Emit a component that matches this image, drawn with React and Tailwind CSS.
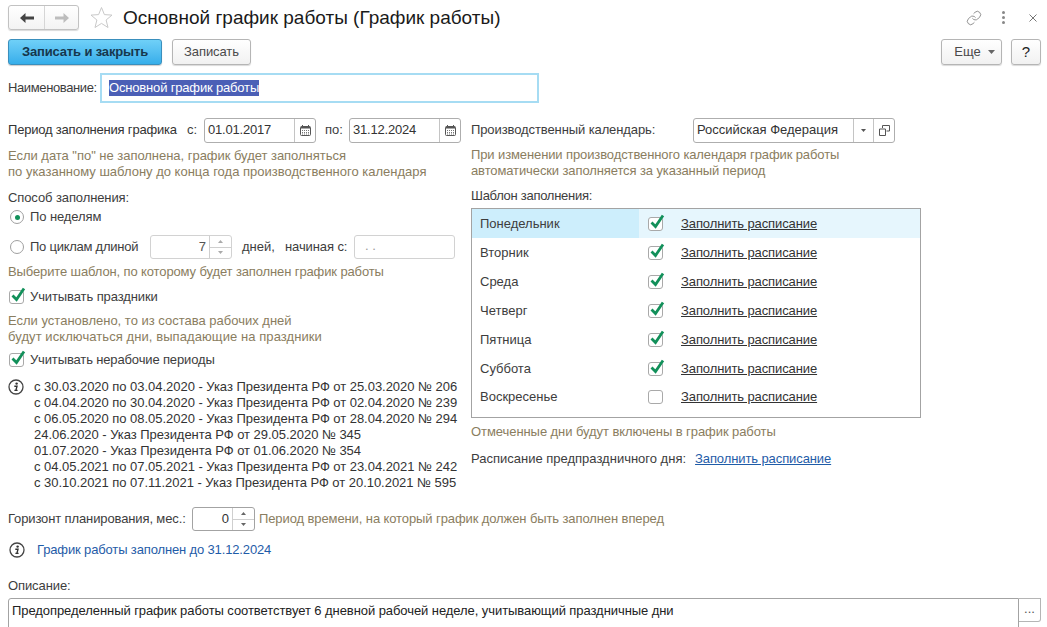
import React from 'react';
import { Link } from 'lucide-react';

const hint = 'text-[#8a7d60]';
const fieldBorder = 'border border-[#aeaeae] rounded-[3px] bg-white';

const days = [
  { name: 'Понедельник', on: true, active: true },
  { name: 'Вторник', on: true },
  { name: 'Среда', on: true },
  { name: 'Четверг', on: true },
  { name: 'Пятница', on: true },
  { name: 'Суббота', on: true },
  { name: 'Воскресенье', on: false }
];

const periods = [
  'с 30.03.2020 по 03.04.2020 - Указ Президента РФ от 25.03.2020 № 206',
  'с 04.04.2020 по 30.04.2020 - Указ Президента РФ от 02.04.2020 № 239',
  'с 06.05.2020 по 08.05.2020 - Указ Президента РФ от 28.04.2020 № 294',
  '24.06.2020 - Указ Президента РФ от 29.05.2020 № 345',
  '01.07.2020 - Указ Президента РФ от 01.06.2020 № 354',
  'с 04.05.2021 по 07.05.2021 - Указ Президента РФ от 23.04.2021 № 242',
  'с 30.10.2021 по 07.11.2021 - Указ Президента РФ от 20.10.2021 № 595'
];

function Check({ on }) {
  return (
    <span className="relative block w-[15px] h-[14px] shrink-0 border border-[#a9a9a9] rounded-[3px] bg-white">
      {on && (
        <svg className="absolute left-[1px] top-[-5px]" width="15" height="16" viewBox="0 0 15 16" fill="none">
          <path d="M1.5 9.5 L5.5 13.5 L13 2.5" stroke="#12905a" strokeWidth="2.8" />
        </svg>
      )}
    </span>
  );
}

function Radio({ on }) {
  return (
    <span className="flex items-center justify-center w-[14px] h-[14px] shrink-0 border border-[#a0a0a0] rounded-full bg-white">
      {on && <span className="block w-[5px] h-[5px] rounded-full bg-[#12905a]" />}
    </span>
  );
}

function InfoIcon() {
  return (
    <svg width="16" height="16" viewBox="0 0 16 16" fill="none" className="shrink-0">
      <circle cx="8" cy="8" r="7" stroke="#444" strokeWidth="1.3" />
      <circle cx="8.6" cy="4.6" r="1.2" fill="#333" />
      <path d="M6.3 7.2 H9 L7.9 11.4 H9.6 M6.4 11.4 H8" stroke="#333" strokeWidth="1.4" />
    </svg>
  );
}

function CalendarIcon() {
  return (
    <svg width="11" height="11" viewBox="0 0 11 11" fill="none">
      <rect x="0.5" y="1.5" width="10" height="9" rx="1" stroke="#555" />
      <rect x="1" y="1.5" width="9" height="2" fill="#555" />
      <path d="M2.5 0 V2 M8.5 0 V2" stroke="#555" />
      <path d="M2 5.5 H9 M2 7.5 H9 M2 9 H9" stroke="#777" strokeDasharray="1 1" />
    </svg>
  );
}

function DateField({ value, width }) {
  return (
    <div className={`flex h-[25px] ${width} ${fieldBorder}`}>
      <span className="flex-1 pl-[3px] leading-[21px] text-[#333] tracking-[-0.2px]">{value}</span>
      <span className="flex items-center justify-center w-[21px] border-l border-[#c4c4c4]">
        <CalendarIcon />
      </span>
    </div>
  );
}

function Spinner({ dark }) {
  const color = dark ? '#666' : '#aaa';
  return (
    <span className="flex flex-col w-[22px] h-full border-l border-[#cfcfcf]">
      <span className="flex-1 flex items-center justify-center border-b border-[#cfcfcf]">
        <svg width="5" height="3" viewBox="0 0 5 3"><path d="M2.5 0 L5 3 H0 Z" fill={color} /></svg>
      </span>
      <span className="flex-1 flex items-center justify-center">
        <svg width="5" height="3" viewBox="0 0 5 3"><path d="M0 0 H5 L2.5 3 Z" fill={color} /></svg>
      </span>
    </span>
  );
}

function GrayButton({ children, className }) {
  return (
    <button className={`h-[26px] border border-[#b5b5b5] rounded-[3px] bg-gradient-to-b from-white to-[#f1f1f1] shadow-[0_1px_1px_rgba(0,0,0,0.15)] text-[#4a4a4a] ${className}`}>
      {children}
    </button>
  );
}

export default function App() {
  return (
    <div className="w-[1047px] h-[627px] overflow-hidden bg-white text-[13px] leading-[16px] text-[#3d3d3d] font-['Liberation_Sans',Arial,sans-serif]">
      <div className="flex flex-col px-[8px] pt-[5px]">
        {/* title bar */}
        <div className="flex items-center h-[25px]">
          <div className="flex w-[71px] h-[25px] border border-[#c2c2c2] rounded-[3px] bg-gradient-to-b from-white to-[#f3f3f3] shadow-[0_1px_1px_rgba(0,0,0,0.15)]">
            <span className="flex items-center justify-center w-[36px] border-r border-[#d6d6d6]">
              <svg width="14" height="10" viewBox="0 0 14 10"><path d="M5.5 0 V3.5 H14 V6.5 H5.5 V10 L0 5 Z" fill="#444" /></svg>
            </span>
            <span className="flex items-center justify-center flex-1">
              <svg width="14" height="10" viewBox="0 0 14 10"><path d="M8.5 0 V3.5 H0 V6.5 H8.5 V10 L14 5 Z" fill="#bdbdbd" /></svg>
            </span>
          </div>
          <svg className="ml-[11px]" width="23" height="23" viewBox="0 0 23 23" fill="none">
            <path d="M11.5 1.5 L14.4 8.6 L22 9.1 L16.1 14 L18 21.5 L11.5 17.4 L5 21.5 L6.9 14 L1 9.1 L8.6 8.6 Z" stroke="#c9c9c9" />
          </svg>
          <span className="ml-[10px] text-[19px] leading-[26px] text-[#1a1a1a]">Основной график работы (График работы)</span>
          <span className="flex-1" />
          <Link className="w-[16px] h-[16px] text-[#777] mr-[20px]" strokeWidth={1.2} />
          <span className="flex flex-col gap-[2px] mr-[24px]">
            <span className="block w-[3px] h-[3px] bg-[#888] rounded-full" />
            <span className="block w-[3px] h-[3px] bg-[#888] rounded-full" />
            <span className="block w-[3px] h-[3px] bg-[#888] rounded-full" />
          </span>
          <svg className="mr-[2px]" width="8" height="8" viewBox="0 0 8 8"><path d="M0.5 0.5 L7.5 7.5 M7.5 0.5 L0.5 7.5" stroke="#777" /></svg>
        </div>

        {/* command bar */}
        <div className="flex items-center h-[26px] mt-[9px]">
          <button className="w-[154px] h-[26px] border border-[#3a8fbd] rounded-[3px] bg-gradient-to-b from-[#6fd0f8] to-[#35aeea] shadow-[0_1px_1px_rgba(0,0,0,0.2)] font-bold tracking-[-0.15px] text-[#16374d]">
            Записать и закрыть
          </button>
          <GrayButton className="w-[79px] ml-[10px] tracking-[-0.1px]">Записать</GrayButton>
          <span className="flex-1" />
          <GrayButton className="flex items-center justify-center gap-[7px] pl-[6px] w-[61px]">
            Еще
            <svg width="7" height="4" viewBox="0 0 7 4"><path d="M0 0 H7 L3.5 4 Z" fill="#666" /></svg>
          </GrayButton>
          <GrayButton className="w-[30px] ml-[9px] mr-[-2px] text-[15px] text-[#222]">?</GrayButton>
        </div>

        {/* name */}
        <div className="flex items-center mt-[8px] h-[30px]">
          <span className="w-[92px] shrink-0 tracking-[-0.38px]">Наименование:</span>
          <div className="flex items-center w-[439px] h-[30px] border-2 border-[#a6dcf3] pl-[7px]">
            <span className="bg-[#4b5fb6] text-white leading-[16px] tracking-[-0.17px]">Основной график работы</span>
          </div>
        </div>

        <div className="flex mt-[15px]">
          {/* left column */}
          <div className="w-[463px] shrink-0">
            <div className="flex items-center h-[25px]">
              <span className="w-[179px] pb-[2px] text-[#333] tracking-[-0.2px]">Период заполнения графика</span>
              <span className="w-[17px] pb-[2px]">с:</span>
              <DateField value="01.01.2017" width="w-[112px]" />
              <span className="ml-[9px] w-[24px] pb-[2px]">по:</span>
              <DateField value="31.12.2024" width="w-[112px]" />
            </div>
            <p className={`mt-[5px] ${hint}`}>
              <span className="tracking-[-0.03px]">Если дата "по" не заполнена, график будет заполняться</span><br />
              по указанному шаблону до конца года производственного календаря
            </p>
            <div className="mt-[10px] tracking-[-0.1px]">Способ заполнения:</div>
            <label className="flex items-center gap-[6px] mt-[3px] ml-[2px] h-[16px]">
              <Radio on />
              <span className="tracking-[-0.1px]">По неделям</span>
            </label>
            <div className="flex items-center mt-[10px] ml-[2px] h-[24px]">
              <Radio />
              <span className="ml-[6px] w-[120px] tracking-[-0.25px]">По циклам длиной</span>
              <div className="flex w-[82px] h-[24px] border border-[#d2d2d2] rounded-[3px]">
                <span className="flex-1 pr-[3px] text-right leading-[22px] text-[#555]">7</span>
                <Spinner />
              </div>
              <span className="ml-[10px] w-[43px]">дней,</span>
              <span className="w-[69px] tracking-[-0.1px]">начиная с:</span>
              <span className="block w-[101px] h-[24px] border border-[#d2d2d2] rounded-[3px] pl-[10px] leading-[20px] text-[#999]">. .</span>
            </div>
            <p className={`mt-[5px] tracking-[-0.12px] ${hint}`}>Выберите шаблон, по которому будет заполнен график работы</p>
            <label className="flex items-center gap-[6px] mt-[9px] ml-[1px] h-[16px]">
              <Check on />
              <span className="tracking-[-0.1px]">Учитывать праздники</span>
            </label>
            <p className={`mt-[8px] ${hint}`}>
              Если установлено, то из состава рабочих дней<br />
              <span className="tracking-[0.08px]">будут исключаться дни, выпадающие на праздники</span>
            </p>
            <label className="flex items-center gap-[6px] mt-[7px] ml-[1px] h-[16px]">
              <Check on />
              <span className="tracking-[-0.14px]">Учитывать нерабочие периоды</span>
            </label>
            <div className="flex mt-[11px]">
              <InfoIcon />
              <div className="ml-[10px] whitespace-nowrap text-[#333] tracking-[-0.035px]">
                {periods.map((line) => (
                  <div key={line}>{line}</div>
                ))}
              </div>
            </div>
          </div>

          {/* right column */}
          <div className="w-[450px]">
            <div className="flex items-center h-[25px]">
              <span className="w-[222px] shrink-0 pb-[2px] tracking-[-0.1px]">Производственный календарь:</span>
              <div className={`flex h-[25px] w-[202px] ${fieldBorder}`}>
                <span className="flex-1 pl-[3px] leading-[21px] text-[#333]">Российская Федерация</span>
                <span className="flex items-center justify-center w-[20px] border-l border-[#c4c4c4]">
                  <svg width="5" height="3" viewBox="0 0 5 3"><path d="M0 0 H5 L2.5 3 Z" fill="#555" /></svg>
                </span>
                <span className="flex items-center justify-center w-[21px] border-l border-[#c4c4c4]">
                  <svg width="11" height="11" viewBox="0 0 11 11" fill="none">
                    <path d="M3.5 3 V0.5 H10.5 V6 H7.5 M0.5 4 H6.5 V10.5 H0.5 Z" stroke="#555" />
                  </svg>
                </span>
              </div>
            </div>
            <p className={`mt-[4px] tracking-[-0.11px] ${hint}`}>
              При изменении производственного календаря график работы<br />
              автоматически заполняется за указанный период
            </p>
            <div className="mt-[9px] tracking-[-0.28px]">Шаблон заполнения:</div>
            <div className="mt-[4px] h-[210px] border border-[#a3a3a3]">
              {days.map((d) => (
                <div key={d.name} className={`flex items-center h-[28.83px] ${d.active ? 'bg-[#e6f6fd]' : ''}`}>
                  <span className={`flex items-center w-[167px] h-full pl-[8px] pt-[2px] ${d.active ? 'bg-[#cdeefc]' : ''}`}>{d.name}</span>
                  <span className="ml-[9px] mt-[2px]"><Check on={d.on} /></span>
                  <span className="ml-[18px] mt-[2px] underline text-[#333] tracking-[-0.1px]">Заполнить расписание</span>
                </div>
              ))}
            </div>
            <p className={`mt-[6px] tracking-[-0.07px] ${hint}`}>Отмеченные дни будут включены в график работы</p>
            <div className="flex mt-[11px]">
              <span>Расписание предпраздничного дня:</span>
              <span className="ml-[9px] underline text-[#1f5ca8] tracking-[-0.1px]">Заполнить расписание</span>
            </div>
          </div>
        </div>

        {/* planning horizon */}
        <div className="flex items-center mt-[16px] h-[24px]">
          <span className="w-[184px] shrink-0 tracking-[-0.12px]">Горизонт планирования, мес.:</span>
          <div className="flex w-[63px] h-[24px] border border-[#a3a3a3] rounded-[3px]">
            <span className="flex-1 pr-[3px] text-right leading-[22px] text-[#333]">0</span>
            <Spinner dark />
          </div>
          <span className={`ml-[4px] tracking-[-0.1px] ${hint}`}>Период времени, на который график должен быть заполнен вперед</span>
        </div>
        <div className="flex items-center mt-[11px] ml-[1px] h-[16px]">
          <InfoIcon />
          <span className="ml-[12px] text-[#1f5ca8] tracking-[-0.14px]">График работы заполнен до 31.12.2024</span>
        </div>

        <div className="mt-[20px] tracking-[-0.1px]">Описание:</div>
        <div className="flex mt-[4px] mr-[-2px] h-[40px]">
          <div className="flex-1 border border-[#a3a3a3] rounded-l-[3px] pl-[3px] pt-[4px] text-[#222] tracking-[-0.07px]">
            Предопределенный график работы соответствует 6 дневной рабочей неделе, учитывающий праздничные дни
          </div>
          <span className="w-[22px] h-[24px] border border-l-0 border-[#b5b5b5] rounded-br-[3px] text-center leading-[20px] text-[#555]">...</span>
        </div>
      </div>
    </div>
  );
}
